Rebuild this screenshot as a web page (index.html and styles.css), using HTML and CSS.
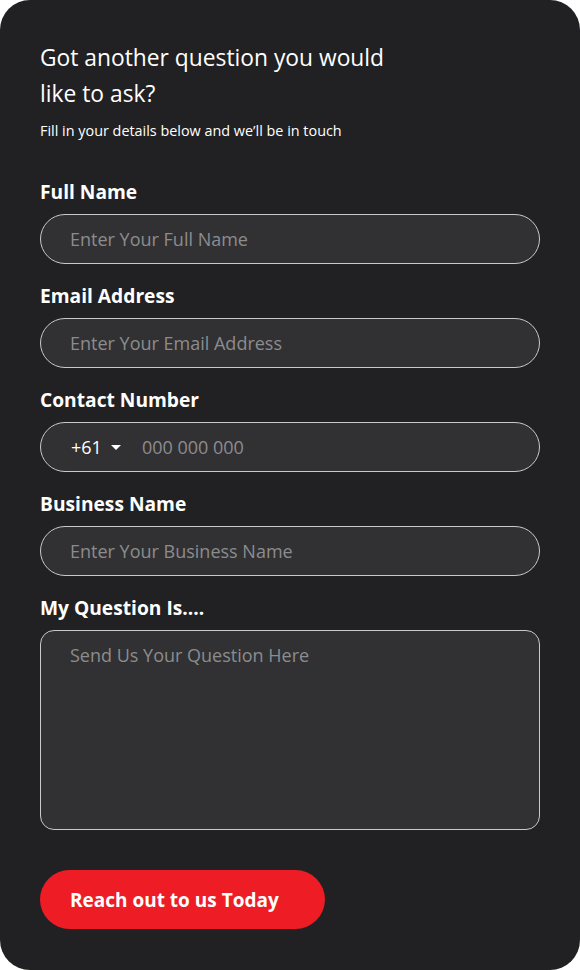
FILE: index.html
```html
<!DOCTYPE html>
<html lang="en">
<head>
  <meta charset="UTF-8" />
  <meta name="viewport" content="width=device-width, initial-scale=1.0"/>
  <title>Ask a Question</title>
  <link rel="stylesheet" href="styles.css">
</head>
<body>

  <form class="card">
    <h1>Got another question you would<br>like to ask?</h1>
    <p class="intro">Fill in your details below and we’ll be in touch</p>

    <div class="field">
      <label for="fullName">Full Name</label>
      <input type="text" id="fullName" placeholder="Enter Your Full Name" />
    </div>

    <div class="field">
      <label for="email">Email Address</label>
      <input type="text" id="email" placeholder="Enter Your Email Address" />
    </div>

    <div class="field">
      <label for="phone">Contact Number</label>
      <div class="phone-group">
        <button type="button" class="country">+61 <span class="caret"></span></button>
        <input type="text" id="phone" placeholder="000 000 000" />
      </div>
    </div>

    <div class="field">
      <label for="business">Business Name</label>
      <input type="text" id="business" placeholder="Enter Your Business Name" />
    </div>

    <div class="field">
      <label for="question">My Question Is....</label>
      <textarea id="question" placeholder="Send Us Your Question Here"></textarea>
    </div>

    <button type="submit" class="submit-btn">Reach out to us Today</button>
  </form>

</body>
</html>
```

FILE: styles.css
```css
:root {
  --bg: #212123;
  --field: #313133;
  --fg: #ffffff;
  --muted: #8c8c8e;
  --border: #c9c9cb;
  --accent: #ee1c25;
}

body {
  margin: 0;
  background: #ffffff;
  font-family: 'Open Sans', 'Noto Sans', sans-serif;
}

.card {
  box-sizing: border-box;
  width: 580px;
  height: 970px;
  background: var(--bg);
  color: var(--fg);
  border-radius: 30px;
  padding: 40px 40px 0;
  display: flex;
  flex-direction: column;
}

h1 {
  font-size: 22.8px;
  font-weight: 400;
  line-height: 36px;
  margin: 0;
}

.intro {
  font-size: 14.4px;
  line-height: 20px;
  margin: 9px 0 39px;
}

.field {
  display: flex;
  flex-direction: column;
  margin-bottom: 20px;
}

label {
  font-size: 19.2px;
  font-weight: 700;
  line-height: 24px;
  margin-bottom: 10px;
}

input[type="text"],
textarea {
  box-sizing: border-box;
  height: 50px;
  padding: 0 29px;
  font-family: inherit;
  font-size: 18px;
  color: var(--fg);
  background: var(--field);
  border: 1px solid var(--border);
  border-radius: 25px;
  outline: none;
}

input::placeholder,
textarea::placeholder {
  color: var(--muted);
}

textarea {
  height: 200px;
  padding: 12px 29px;
  border-radius: 14px;
  resize: none;
}

.phone-group {
  box-sizing: border-box;
  display: flex;
  align-items: center;
  height: 50px;
  background: var(--field);
  border: 1px solid var(--border);
  border-radius: 25px;
  padding-left: 30px;
}

.phone-group input[type="text"] {
  flex: 1;
  height: 48px;
  border: none;
  background: transparent;
  padding: 0 0 0 21px;
}

.country {
  display: flex;
  align-items: center;
  gap: 9px;
  padding: 0;
  background: none;
  border: none;
  color: var(--fg);
  font-family: inherit;
  font-size: 18px;
  cursor: pointer;
}

.caret {
  width: 0;
  height: 0;
  border-left: 5px solid transparent;
  border-right: 5px solid transparent;
  border-top: 5px solid var(--fg);
}

.submit-btn {
  align-self: flex-start;
  margin-top: 20px;
  height: 59px;
  padding: 0 46px 0 30px;
  background: var(--accent);
  color: var(--fg);
  border: none;
  border-radius: 30px;
  font-family: inherit;
  font-size: 19px;
  font-weight: 700;
  cursor: pointer;
}
```
